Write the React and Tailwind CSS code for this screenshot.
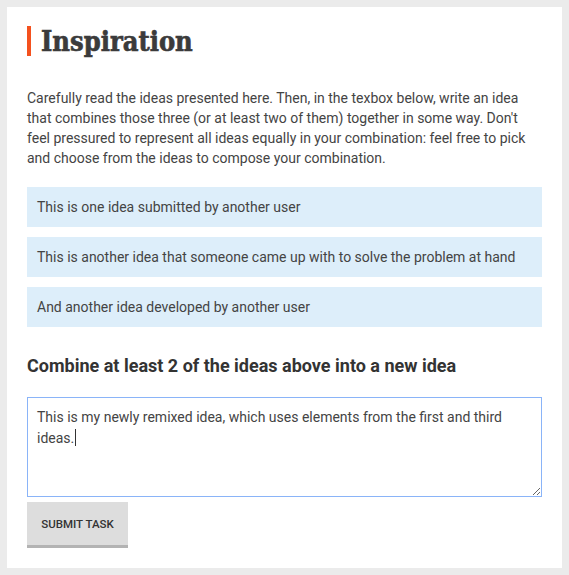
import React from "react";

export default function App() {
  const ideas = [
    "This is one idea submitted by another user",
    "This is another idea that someone came up with to solve the problem at hand",
    "And another idea developed by another user",
  ];
  const value = "This is my newly remixed idea, which uses elements from the first and third ideas.";
  return (
    <div className="min-h-screen bg-[#ebebeb] p-[7px] font-['Roboto',sans-serif] text-[#444]">
      <div className="bg-white px-[20px] pt-[19px] pb-[20px]">
        <div className="flex h-[30px] items-center border-l-[4px] border-[#f4511e] pl-[10px]">
          <h1 className="font-['DejaVu_Serif',serif] text-[27px] font-bold leading-none text-[#3b3b3b] [font-stretch:condensed] [-webkit-text-stroke:0.6px_#3b3b3b]">
            Inspiration
          </h1>
        </div>
        <p className="mt-[32px] text-[14px] leading-[20px] text-[#444]">
          Carefully read the ideas presented here. Then, in the texbox below, write an idea that
          combines those three (or at least two of them) together in some way. Don't feel pressured
          to represent all ideas equally in your combination: feel free to pick and choose from the
          ideas to compose your combination.
        </p>
        <div className="mt-[19px] flex flex-col gap-[10px]">
          {ideas.map((t) => (
            <div key={t} className="flex h-[40px] items-center bg-[#ddeefa] px-[10px] text-[14px] text-[#444]">
              {t}
            </div>
          ))}
        </div>
        <h2 className="mt-[26px] text-[18px] font-bold leading-[26px] text-[#333]">
          Combine at least 2 of the ideas above into a new idea
        </h2>
        <div className="relative mt-[18px]">
          <textarea
            readOnly
            defaultValue={value}
            className="block h-[100px] w-full border border-[#8ab4f8] px-[9px] py-[9px] text-[14px] leading-[21px] text-[#444] outline-none"
          />
          <div className="pointer-events-none absolute inset-0 border border-transparent px-[9px] py-[9px] text-[14px] leading-[21px] text-transparent">
            {value}
            <span className="ml-[1px] inline-block h-[17px] w-0 border-l border-[#333] align-[-3px]" />
          </div>
        </div>
        <button className="mt-[5px] block h-[46px] w-[101px] border-b-[3px] border-[#b3b3b3] bg-[#dddddd] pt-[3px] text-[11.5px] font-medium uppercase text-[#333]">
          Submit Task
        </button>
      </div>
    </div>
  );
}
